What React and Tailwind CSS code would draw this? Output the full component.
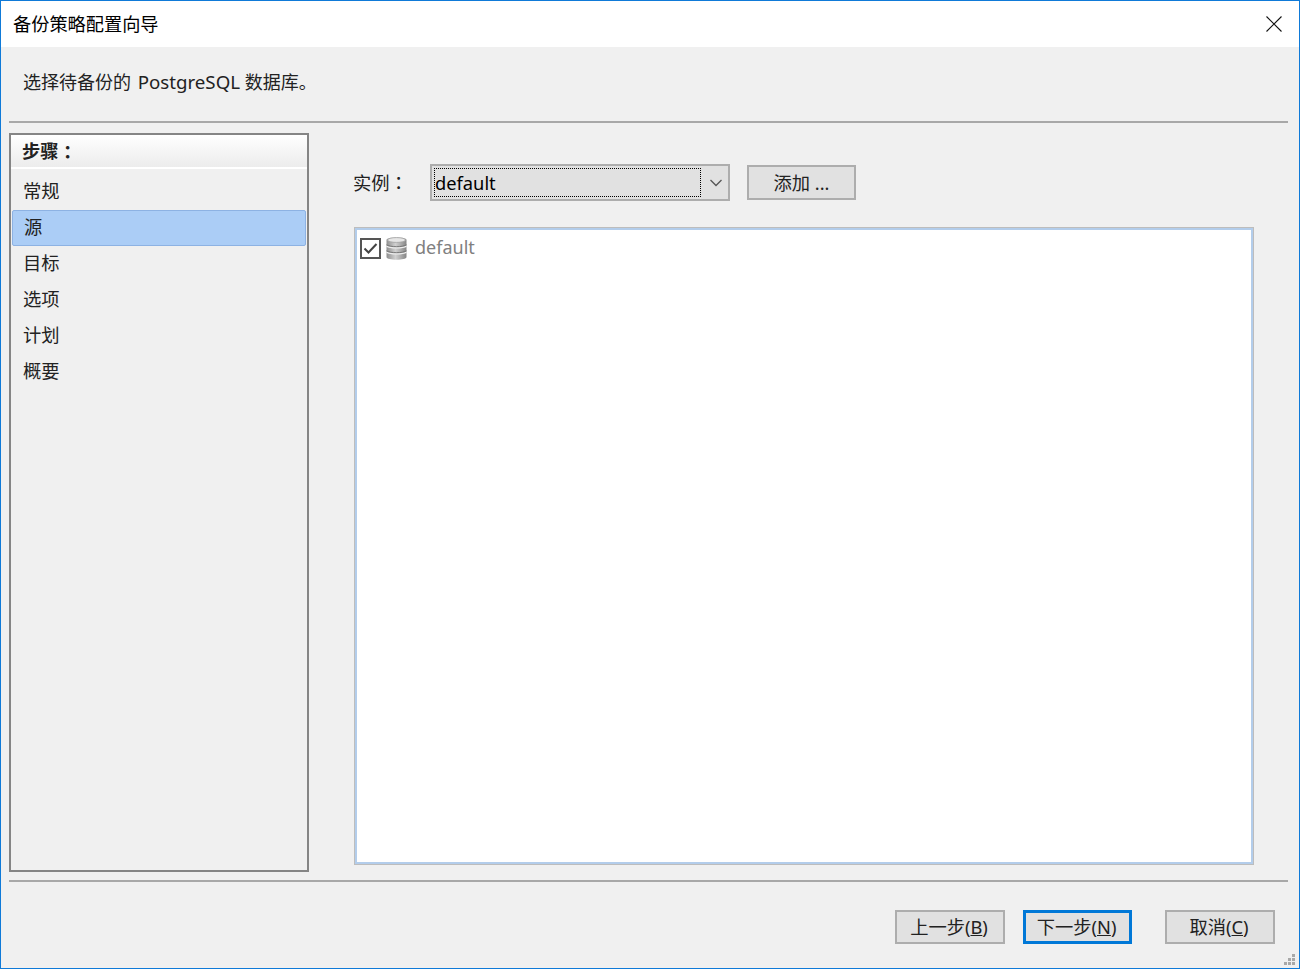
import React from 'react';

const steps = ['常规', '源', '目标', '选项', '计划', '概要'];
const font = "font-['Noto_Sans','Noto_Sans_CJK_SC',sans-serif]";
const colonFont = "font-['Noto_Sans_CJK_TC',sans-serif]";

function CloseIcon() {
  return (
    <svg width="16" height="16" viewBox="0 0 16 16" className="shrink-0">
      <path d="M0.5 0.5L15.5 15.5M15.5 0.5L0.5 15.5" stroke="#111" strokeWidth="1.1" fill="none" />
    </svg>
  );
}

function Chevron() {
  return (
    <svg width="12" height="8" viewBox="0 0 12 8">
      <path d="M0.5 1L6 6.5L11.5 1" stroke="#555" strokeWidth="1.3" fill="none" />
    </svg>
  );
}

function DbIcon() {
  return (
    <svg width="21" height="25" viewBox="0 0 21 25" className="shrink-0">
      <defs>
        <linearGradient id="db" x1="0" x2="1" y1="0" y2="0">
          <stop offset="0" stopColor="#8f8f8f" />
          <stop offset="0.45" stopColor="#d0d0d0" />
          <stop offset="1" stopColor="#858585" />
        </linearGradient>
      </defs>
      <path d="M0.5 4C0.5 0.8 20.5 0.8 20.5 4V21C20.5 24.6 0.5 24.6 0.5 21Z" fill="url(#db)" />
      <ellipse cx="10.5" cy="4" rx="9" ry="2.4" fill="#e6e6e6" stroke="#a0a0a0" strokeWidth="0.8" />
      <path d="M0.5 10C4 12.5 17 12.5 20.5 10M0.5 16C4 18.5 17 18.5 20.5 16" stroke="#eeeeee" strokeWidth="1.4" fill="none" />
      <path d="M0.5 8.8C4 11.3 17 11.3 20.5 8.8M0.5 14.8C4 17.3 17 17.3 20.5 14.8" stroke="#6f6f6f" strokeWidth="0.9" fill="none" />
    </svg>
  );
}

function CheckBox() {
  return (
    <div className="w-[21px] h-[21px] border-2 border-[#555] bg-white flex items-center justify-center shrink-0">
      <svg width="15" height="13" viewBox="0 0 15 13">
        <path d="M1.5 6.5L5.5 10.5L13.5 2" stroke="#444" strokeWidth="2" fill="none" />
      </svg>
    </div>
  );
}

function WizardButton({ label, hotkey, focused, className }) {
  return (
    <button
      className={`h-[34px] flex items-center justify-center pr-[2px] text-[#222] bg-[#e1e1e1] ${
        focused ? 'w-[109px] border-[3px] border-[#0078d7]' : 'w-[110px] border-2 border-[#adadad]'
      } ${className || ''}`}
    >
      {label}(<span className="underline">{hotkey}</span>)
    </button>
  );
}

export default function App() {
  return (
    <div className={`${font} w-[1300px] h-[969px] relative flex flex-col border border-[#0f7ad8] bg-[#f0f0f0] text-[18.3px] leading-[24px] text-[#222] overflow-hidden`}>
      <div className="h-[46px] shrink-0 bg-white flex items-center justify-between pl-[12px] pr-[17px] pb-[1px]">
        <span className="text-black text-[18.2px]">备份策略配置向导</span>
        <CloseIcon />
      </div>

      <div className="h-[74px] shrink-0 flex items-center pl-[22px] pb-[4px]">
        <span className="text-[18px]">
          选择待备份的 <span className="ml-[2px] text-[18.7px]">PostgreSQL</span> 数据库。
        </span>
      </div>
      <div className="h-[2px] shrink-0 ml-[8px] mr-[11px] bg-[#a8a8a8]" />

      <div className="flex-1 flex pl-[8px] pt-[10px] min-h-0">
        <div className="w-[300px] h-[739px] shrink-0 border-2 border-[#858585] flex flex-col">
          <div className="h-[34px] shrink-0 flex items-center pl-[11px] font-bold bg-gradient-to-b from-white to-[#ececec] border-b-2 border-b-white">
            步骤<span className={colonFont}>：</span>
          </div>
          <div className="flex flex-col pt-[5px]">
            {steps.map((step) => (
              <div
                key={step}
                className={`h-[36px] flex items-center pb-[2px] ${
                  step === '源'
                    ? 'mx-[1px] pl-[11px] bg-[#abcdf6] border border-[#8db2e3] rounded-[2px]'
                    : 'pl-[12px]'
                }`}
              >
                {step}
              </div>
            ))}
          </div>
        </div>

        <div className="flex flex-col pl-[44px] pt-[31px]">
          <div className="flex items-center h-[37px]">
            <span className="w-[77px]">
              实例<span className={colonFont}>：</span>
            </span>
            <div className="w-[300px] h-[37px] border-2 border-[#adadad] bg-[#e1e1e1] flex items-center pl-[2px] pr-[5px]">
              <div className="w-[267px] h-[29px] border border-dotted border-black flex items-center text-black">default</div>
              <div className="flex-1 flex justify-end pr-[1px]">
                <Chevron />
              </div>
            </div>
            <button className="ml-[17px] w-[109px] h-[35px] border-2 border-[#adadad] bg-[#e1e1e1] flex items-center justify-center">
              添加 ...
            </button>
          </div>

          <div className="mt-[26px] ml-[1px] w-[900px] h-[638px] border border-[#bdbdbd] shadow-[inset_0_0_0_2px_#b3cdeb] bg-white pl-[5px] pt-[7px]">
            <div className="flex items-center gap-[5px]">
              <CheckBox />
              <DbIcon />
              <span className="ml-[3px] pb-[2px] text-[18px] text-[#808080]">default</span>
            </div>
          </div>
        </div>
      </div>

      <div className="h-[2px] shrink-0 ml-[8px] mr-[11px] mt-[9px] bg-[#a8a8a8]" />

      <div className="h-[86px] shrink-0 flex items-start pt-[28px] pl-[894px]">
        <WizardButton label="上一步" hotkey="B" />
        <WizardButton label="下一步" hotkey="N" focused className="ml-[18px]" />
        <WizardButton label="取消" hotkey="C" className="ml-[33px]" />
      </div>

      <svg width="13" height="13" viewBox="0 0 13 13" className="absolute right-[3px] bottom-[2px]">
        <g fill="#a8a8a8">
          <rect x="9" y="1" width="3" height="3" />
          <rect x="5" y="5" width="3" height="3" />
          <rect x="9" y="5" width="3" height="3" />
          <rect x="1" y="9" width="3" height="3" />
          <rect x="5" y="9" width="3" height="3" />
          <rect x="9" y="9" width="3" height="3" />
        </g>
      </svg>
    </div>
  );
}
